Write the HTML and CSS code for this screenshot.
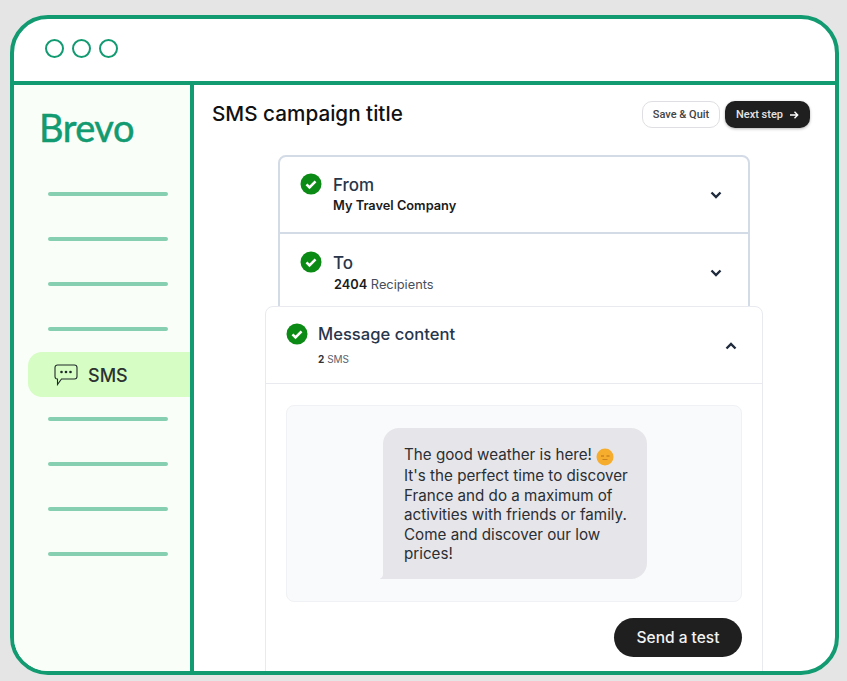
FILE: index.html
```html
<!DOCTYPE html>
<html lang="en">
<head>
    <meta charset="UTF-8">
    <meta name="viewport" content="width=device-width, initial-scale=1.0">
    <title>SMS campaign title</title>
    <link rel="stylesheet" href="styles.css">
</head>
<body>
    <div class="frame">
        <div class="topbar">
            <span class="dot"></span>
            <span class="dot"></span>
            <span class="dot"></span>
        </div>
        <div class="window">
            <div class="sidebar">
                <div class="logo">Brevo</div>
                <div class="nav">
                    <div class="nav-row"><span class="nav-line"></span></div>
                    <div class="nav-row"><span class="nav-line"></span></div>
                    <div class="nav-row"><span class="nav-line"></span></div>
                    <div class="nav-row"><span class="nav-line"></span></div>
                    <div class="nav-active">
                        <svg class="sms-icon" width="24" height="22" viewBox="0 0 24 22" fill="none" stroke="#1f2a2a" stroke-width="1.1">
                            <path d="M3.500 1h17a2.500 2.500 0 0 1 2.500 2.500v9a2.500 2.500 0 0 1-2.500 2.500H7.500L3.500 20.500V15A2.500 2.500 0 0 1 1 12.500v-9A2.500 2.500 0 0 1 3.500 1z"/>
                            <circle cx="7.500" cy="8" r="1.300" fill="#1f2a2a" stroke="none"/>
                            <circle cx="12" cy="8" r="1.300" fill="#1f2a2a" stroke="none"/>
                            <circle cx="16.500" cy="8" r="1.300" fill="#1f2a2a" stroke="none"/>
                        </svg>
                        <span class="sms-label">SMS</span>
                    </div>
                    <div class="nav-row"><span class="nav-line"></span></div>
                    <div class="nav-row"><span class="nav-line"></span></div>
                    <div class="nav-row"><span class="nav-line"></span></div>
                    <div class="nav-row"><span class="nav-line"></span></div>
                </div>
            </div>
            <div class="main">
                <div class="title-row">
                    <h1>SMS campaign title</h1>
                    <div class="actions">
                        <span class="btn-light">Save &amp; Quit</span>
                        <span class="btn-dark">Next step
                            <svg width="10" height="10" viewBox="0 0 10 10" fill="none" stroke="#fff" stroke-width="1.400">
                                <path d="M1 5h7.500M5.500 1.800 8.700 5 5.500 8.200"/>
                            </svg>
                        </span>
                    </div>
                </div>
                <div class="steps">
                    <div class="step step-from">
                        <svg class="check" width="22" height="22" viewBox="0 0 22 22"><circle cx="11" cy="11" r="10.500" fill="#0b8a15"/><path d="M6.500 11.300l3 3 6-6" fill="none" stroke="#fff" stroke-width="2.600"/></svg>
                        <div class="step-text">
                            <div class="step-name">From</div>
                            <div class="step-sub strong">My Travel Company</div>
                        </div>
                        <svg class="chev" width="12" height="8" viewBox="0 0 12 8" fill="none" stroke="#1f2b3d" stroke-width="2.400"><path d="M1.500 1.500 6 6l4.500-4.500"/></svg>
                    </div>
                    <div class="step step-to">
                        <svg class="check" width="22" height="22" viewBox="0 0 22 22"><circle cx="11" cy="11" r="10.500" fill="#0b8a15"/><path d="M6.500 11.300l3 3 6-6" fill="none" stroke="#fff" stroke-width="2.600"/></svg>
                        <div class="step-text">
                            <div class="step-name">To</div>
                            <div class="step-sub"><b>2404</b> Recipients</div>
                        </div>
                        <svg class="chev" width="12" height="8" viewBox="0 0 12 8" fill="none" stroke="#1f2b3d" stroke-width="2.400"><path d="M1.500 1.500 6 6l4.500-4.500"/></svg>
                    </div>
                    <div class="message-card">
                        <div class="message-head">
                            <svg class="check" width="22" height="22" viewBox="0 0 22 22"><circle cx="11" cy="11" r="10.500" fill="#0b8a15"/><path d="M6.500 11.300l3 3 6-6" fill="none" stroke="#fff" stroke-width="2.600"/></svg>
                            <div class="message-text">
                                <div class="message-name">Message content</div>
                                <div class="message-sub"><b>2</b> SMS</div>
                            </div>
                            <svg class="chev chev-up" width="12" height="8" viewBox="0 0 12 8" fill="none" stroke="#1f2b3d" stroke-width="2.400"><path d="M1.500 6.500 6 2l4.500 4.500"/></svg>
                        </div>
                        <div class="message-body">
                            <div class="preview">
                                <div class="bubble">
                                    The good weather is here!
                                    <svg class="emoji" width="18" height="18" viewBox="0 0 18 18"><circle cx="9" cy="9" r="8.500" fill="#f6ac2c"/><path d="M5 8h3M10.500 8h3" stroke="#b5711a" stroke-width="1"/><path d="M6.500 11.500h5" stroke="#c9821f" stroke-width="1"/></svg>
                                    <br>It's the perfect time to discover<br>France and do a maximum of<br>activities with friends or family.<br>Come and discover our low<br>prices!
                                    <svg class="tail" width="10" height="8" viewBox="0 0 10 8"><path d="M10 0v8H2C0.800 8 0 7.700 0 7.400 3 6.800 3.500 3 3.500 0z" fill="#e6e6ea"/></svg>
                                </div>
                            </div>
                            <div class="test-row">
                                <span class="btn-test">Send a test</span>
                            </div>
                        </div>
                    </div>
                </div>
            </div>
        </div>
    </div>
</body>
</html>
```

FILE: styles.css
```css
html, body {
    height: 100%;
}
body {
    margin: 0;
    background-color: #e5e5e5;
    font-family: Inter, "Liberation Sans", sans-serif;
    overflow: hidden;
}
.frame {
    box-sizing: border-box;
    width: 829px;
    height: 660px;
    margin: 15px 0 0 10px;
    border: 4px solid #129a70;
    border-radius: 38px;
    background-color: white;
    overflow: hidden;
    display: flex;
    flex-direction: column;
}
.topbar {
    box-sizing: border-box;
    flex: 0 0 66px;
    display: flex;
    align-items: center;
    gap: 8px;
    padding: 0 0 3px 31px;
    border-bottom: 4px solid #129a70;
}
.dot {
    box-sizing: border-box;
    width: 19px;
    height: 19px;
    border: 2px solid #129a70;
    border-radius: 50%;
}
.window {
    flex: 1;
    display: flex;
    min-height: 0;
}
.sidebar {
    box-sizing: border-box;
    flex: 0 0 180px;
    background-color: #f9fff8;
    border-right: 4px solid #129a70;
    padding-left: 14px;
}
.logo {
    margin: 19px 0 0 11px;
    font-family: Lato, sans-serif;
    font-size: 38px;
    line-height: 47px;
    letter-spacing: -0.5px;
    color: #129a70;
    -webkit-text-stroke: 0.5px #129a70;
}
.nav {
    margin-top: 20px;
    display: flex;
    flex-direction: column;
}
.nav-row {
    height: 45px;
    display: flex;
    align-items: center;
    padding-left: 20px;
}
.nav-line {
    width: 120px;
    height: 4px;
    border-radius: 2px;
    background-color: #86cfb0;
}
.nav-active {
    height: 45px;
    display: flex;
    align-items: center;
    gap: 10px;
    padding-left: 26px;
    margin-top: 1px;
    margin-bottom: -1px;
    background-color: #d6fdc4;
    border-radius: 14px 0 0 14px;
    font-size: 18px;
    font-weight: 500;
    color: #2a3232;
}
.sms-label {
    padding-top: 2px;
}
.main {
    flex: 1;
    min-width: 0;
    overflow: hidden;
}
.title-row {
    display: flex;
    justify-content: space-between;
    align-items: center;
    padding: 16px 25px 0 18px;
}
h1 {
    margin: -2px 0 0;
    font-size: 20.700px;
    font-weight: 500;
    color: #111;
}
.actions {
    display: flex;
    gap: 5px;
}
.btn-light, .btn-dark {
    box-sizing: border-box;
    height: 27px;
    display: flex;
    align-items: center;
    justify-content: center;
    gap: 6px;
    border-radius: 10px;
    font-family: Roboto, sans-serif;
    font-size: 11px;
    font-weight: 500;
}
.btn-light {
    width: 78px;
    background-color: white;
    border: 1px solid #dfdfe3;
    color: #444;
}
.btn-dark {
    width: 85px;
    background-color: #1f1f1f;
    color: #e4e4e4;
    box-shadow: 0 1px 3px rgba(0,0,0,0.3);
}
.steps {
    width: 472px;
    margin: 27px 0 0 84px;
}
.step {
    box-sizing: border-box;
    display: flex;
    align-items: flex-start;
    border: 2px solid #d3dbe7;
    padding: 16px 26px 0 20px;
    background-color: white;
}
.step-from {
    height: 79px;
    border-radius: 8px 8px 0 0;
}
.step-to {
    height: 72px;
    border-top: 0;
    border-bottom: 0;
    padding-top: 17px;
}
.check {
    flex: none;
}
.step-text {
    flex: 1;
    margin-left: 11px;
}
.step-name {
    font-size: 17px;
    font-weight: 500;
    line-height: 24px;
    color: #27364b;
}
.step-sub {
    font-size: 12.800px;
    line-height: 19px;
    color: #474e5a;
}
.step-to .step-sub {
    padding-left: 1px;
}
.step-sub b, .step-sub.strong {
    font-weight: 600;
    color: #1b1b1b;
}
.step-from .step-sub {
    margin-top: -1px;
}
.chev {
    flex: none;
    margin-top: 18px;
}
.message-card {
    position: relative;
    margin: 0 -13px;
    border: 1px solid #e8eaf0;
    border-radius: 8px 8px 0 0;
    background-color: white;
}
.message-head {
    box-sizing: border-box;
    height: 77px;
    display: flex;
    align-items: flex-start;
    padding: 16px 25px 0 20px;
    border-bottom: 1px solid #e8eaf0;
}
.message-text {
    flex: 1;
    margin-left: 10px;
}
.message-name {
    font-size: 16.600px;
    font-weight: 500;
    line-height: 23px;
    color: #27364b;
}
.message-sub {
    margin-top: 6px;
    font-size: 10px;
    line-height: 14px;
    color: #5a6270;
}
.message-sub b {
    color: #333;
}
.chev-up {
    margin-top: 19px;
}
.message-body {
    padding: 21px 20px 60px;
}
.preview {
    box-sizing: border-box;
    height: 197px;
    padding: 22px 0 0 2px;
    display: flex;
    justify-content: center;
    background-color: #f9fafb;
    border: 1px solid #f0f1f4;
    border-radius: 8px;
}
.bubble {
    position: relative;
    box-sizing: border-box;
    width: 264px;
    height: 151px;
    padding: 17px 5px 0 21px;
    background-color: #e6e6ea;
    border-radius: 16px 16px 16px 0;
    font-size: 15.200px;
    line-height: 19.600px;
    color: #2b2e33;
}
.emoji {
    vertical-align: -6px;
}
.tail {
    position: absolute;
    left: -3px;
    bottom: 0;
}
.test-row {
    display: flex;
    justify-content: flex-end;
    margin-top: 16px;
}
.btn-test {
    width: 128px;
    height: 39px;
    display: flex;
    align-items: center;
    justify-content: center;
    border-radius: 20px;
    background-color: #1f1f1f;
    color: #f2f2f2;
    font-size: 15.500px;
    font-weight: 500;
}
```
